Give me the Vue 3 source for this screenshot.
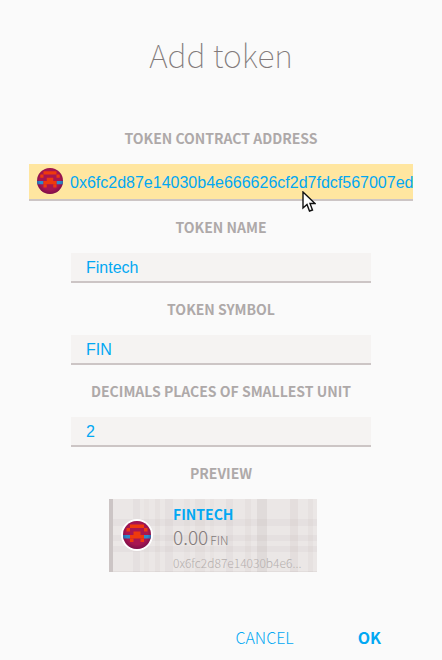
<script setup>
import { ref, computed } from 'vue'

const address = ref('0x6fc2d87e14030b4e666626cf2d7fdcf567007ed')
const name = ref('Fintech')
const symbol = ref('FIN')
const decimals = ref('2')

const shortAddress = computed(() => address.value.slice(0, 19) + '...')
const balance = computed(() => (0).toFixed(Number(decimals.value) || 0))

const red = '#ee3a0c'
const blue = '#2c8ccc'
const blocks = [
  { x: 2, y: 1, w: 4, c: red },
  { x: 1, y: 2, w: 1, c: red },
  { x: 6, y: 2, w: 1, c: red },
  { x: 3, y: 3, w: 2, c: red },
  { x: 0, y: 4, w: 2, c: blue },
  { x: 6, y: 4, w: 2, c: blue },
  { x: 2, y: 4, w: 4, c: red },
  { x: 2, y: 5, w: 1, c: red },
  { x: 5, y: 5, w: 1, c: red }
]

// Woven background of the wallet card: [offset, thickness, opacity]
const columns = [
  [20, 7, 0.04], [31, 5, 0.02], [42, 5, 0.03], [52, 8, 0.04], [71, 6, 0.02], [82, 10, 0.03],
  [97, 4, 0.02], [113, 7, 0.04], [132, 6, 0.03], [144, 10, 0.07], [177, 8, 0.05], [195, 5, 0.03]
]
const rows = [[20, 7, 0.04], [36, 6, 0.04], [47, 6, 0.04], [72, 1, 0.06]]
</script>

<template>
  <form class="dialog" @submit.prevent>
    <h1>Add token</h1>

    <label for="address">Token contract address</label>
    <div class="address">
      <svg class="identicon" viewBox="0 0 8 8" aria-hidden="true">
        <defs>
          <radialGradient id="ball" cx="0.5" cy="0.45" r="0.55">
            <stop offset="0.7" stop-color="#300040" stop-opacity="0" />
            <stop offset="1" stop-color="#300040" stop-opacity="0.35" />
          </radialGradient>
        </defs>
        <rect width="8" height="8" fill="#a81650" />
        <rect v-for="(b, i) in blocks" :key="i" :x="b.x" :y="b.y" :width="b.w" height="1" :fill="b.c" />
        <rect width="8" height="8" fill="url(#ball)" />
      </svg>
      <input id="address" v-model="address" type="text" />
      <svg class="pointer" viewBox="0 0 14 22" aria-hidden="true">
        <path d="M1 1V17L5 13.500L7.500 20L10.500 19L8 12.500H13Z" fill="#fff" stroke="#111" stroke-width="1.400" />
      </svg>
    </div>

    <label for="name">Token name</label>
    <input id="name" v-model="name" class="field" type="text" />

    <label for="symbol">Token symbol</label>
    <input id="symbol" v-model="symbol" class="field" type="text" />

    <label for="decimals">Decimals places of smallest unit</label>
    <input id="decimals" v-model="decimals" class="field" type="text" />

    <h2>Preview</h2>
    <section class="wallet">
      <svg class="weave" viewBox="0 0 204 73" preserveAspectRatio="none" aria-hidden="true">
        <rect v-for="c in columns" :key="'c' + c[0]" :x="c[0]" y="0" :width="c[1]" height="73" fill="#5a4040" :opacity="c[2]" />
        <rect v-for="r in rows" :key="'r' + r[0]" x="0" :y="r[0]" width="204" :height="r[1]" fill="#5a4040" :opacity="r[2]" />
      </svg>
      <svg class="identicon" viewBox="0 0 8 8" aria-hidden="true">
        <rect width="8" height="8" fill="#a81650" />
        <rect v-for="(b, i) in blocks" :key="i" :x="b.x" :y="b.y" :width="b.w" height="1" :fill="b.c" />
        <rect width="8" height="8" fill="url(#ball)" />
      </svg>
      <div class="info">
        <h3>{{ name }}</h3>
        <p class="balance">{{ balance }}<small>{{ symbol }}</small></p>
        <p class="hash">{{ shortAddress }}</p>
      </div>
    </section>

    <footer>
      <button type="button">Cancel</button>
      <button type="submit" class="ok">OK</button>
    </footer>
  </form>
</template>

<style>
body {
  background: #fafafa;
}
</style>

<style scoped>
* {
  box-sizing: border-box;
}
.dialog {
  display: flex;
  flex-direction: column;
  align-items: center;
  padding: 30px 28px 0;
  font-family: "Noto Sans CJK SC", sans-serif;
  color: #827a7a;
}
h1, h2, h3, p {
  margin: 0;
}
h1 {
  margin-bottom: 48px;
  font-size: 32px;
  font-weight: 100;
  line-height: 48px;
}
label, h2 {
  font-size: 14px;
  font-weight: 700;
  line-height: 24px;
  text-transform: uppercase;
  color: #aeA9a9;
}
input {
  border: 0;
  outline: 0;
  font-family: "Liberation Sans", Arial, sans-serif;
  font-size: 16px;
  color: #02a8f3;
  background: transparent;
}
.address {
  position: relative;
  display: flex;
  align-items: flex-start;
  width: 100%;
  max-width: 384px;
  height: 37px;
  margin: 14px 0;
  padding: 4px 0 0 8px;
  background: #ffe6a0;
  border-bottom: 2px solid #ccc5c5;
}
.address input {
  flex: 1;
  min-width: 0;
  height: 30px;
  padding: 0 0 0 7px;
}
.identicon {
  flex: none;
  width: 26px;
  height: 26px;
  border-radius: 50%;
}
.pointer {
  position: absolute;
  left: 273px;
  top: 27px;
  width: 14px;
  height: 22px;
}
.field {
  width: 100%;
  max-width: 300px;
  height: 30px;
  margin: 14px 0;
  padding: 2px 15px 0;
  background: #f5f3f2;
  border-bottom: 2px solid #ccc5c5;
}
.wallet {
  position: relative;
  display: flex;
  align-items: flex-start;
  width: 208px;
  height: 73px;
  margin: 14px 16px 47px 0;
  padding-left: 8px;
  border-left: 4px solid #ccc5c5;
  background: #ebe7e6;
}
.weave {
  position: absolute;
  inset: 0;
  width: 100%;
  height: 100%;
}
.wallet .identicon {
  position: relative;
  width: 32px;
  height: 32px;
  margin-top: 20px;
  border: 2px solid #fff;
}
.info {
  position: relative;
  min-width: 0;
  margin-left: 20px;
  padding-top: 3px;
}
h3 {
  font-size: 14px;
  font-weight: 700;
  line-height: 24px;
  text-transform: uppercase;
  color: #02a8f3;
}
.balance {
  font-size: 19px;
  font-weight: 300;
  line-height: 22px;
}
.balance small {
  margin-left: 2px;
  font-size: 12px;
}
.hash {
  font-size: 12px;
  font-weight: 300;
  line-height: 24px;
  white-space: nowrap;
  color: #b5afae;
}
footer {
  display: flex;
  justify-content: flex-end;
  gap: 64px;
  width: 100%;
  padding-right: 33px;
}
button {
  padding: 0;
  border: 0;
  background: none;
  font-family: inherit;
  font-size: 16px;
  font-weight: 300;
  line-height: 36px;
  text-transform: uppercase;
  color: #02a8f3;
}
.ok {
  font-weight: 700;
}
</style>
